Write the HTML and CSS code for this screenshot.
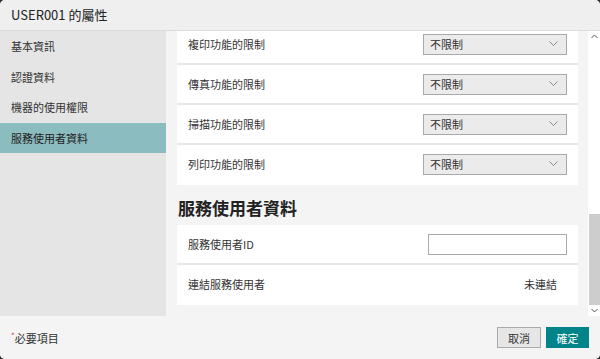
FILE: index.html
```html
<!DOCTYPE html>
<html lang="zh-Hant">
<head>
    <meta charset="UTF-8">
    <title>USER001 的屬性</title>
    <link rel="stylesheet" href="styles.css">
</head>
<body>
    <div class="dialog">
        <div class="dlg-header">USER001 的屬性</div>
        <div class="dlg-body">
            <nav class="sidebar">
                <div class="nav-item">基本資訊</div>
                <div class="nav-item">認證資料</div>
                <div class="nav-item">機器的使用權限</div>
                <div class="nav-item active">服務使用者資料</div>
            </nav>
            <div class="pane">
                <div class="pane-scroll">
                    <div class="card">
                        <div class="row">
                            <span class="label">複印功能的限制</span>
                            <div class="select"><span>不限制</span><svg width="9" height="6" viewBox="0 0 9 6"><polyline points="0.5,0.5 4.5,4.5 8.5,0.5" fill="none" stroke="#8a8a8a" stroke-width="1"/></svg></div>
                        </div>
                        <div class="row">
                            <span class="label">傳真功能的限制</span>
                            <div class="select"><span>不限制</span><svg width="9" height="6" viewBox="0 0 9 6"><polyline points="0.5,0.5 4.5,4.5 8.5,0.5" fill="none" stroke="#8a8a8a" stroke-width="1"/></svg></div>
                        </div>
                        <div class="row">
                            <span class="label">掃描功能的限制</span>
                            <div class="select"><span>不限制</span><svg width="9" height="6" viewBox="0 0 9 6"><polyline points="0.5,0.5 4.5,4.5 8.5,0.5" fill="none" stroke="#8a8a8a" stroke-width="1"/></svg></div>
                        </div>
                        <div class="row">
                            <span class="label">列印功能的限制</span>
                            <div class="select"><span>不限制</span><svg width="9" height="6" viewBox="0 0 9 6"><polyline points="0.5,0.5 4.5,4.5 8.5,0.5" fill="none" stroke="#8a8a8a" stroke-width="1"/></svg></div>
                        </div>
                    </div>
                    <h2 class="section-title">服務使用者資料</h2>
                    <div class="card">
                        <div class="row">
                            <span class="label">服務使用者ID</span>
                            <div class="text-input"></div>
                        </div>
                        <div class="row">
                            <span class="label">連結服務使用者</span>
                            <span class="value">未連結</span>
                        </div>
                    </div>
                </div>
            </div>
            <div class="scrollbar">
                <div class="sb-btn"><svg width="7" height="5" viewBox="0 0 7 5"><polyline points="0.5,4 3.5,1 6.5,4" fill="none" stroke="#555" stroke-width="1"/></svg></div>
                <div class="sb-track"><div class="sb-thumb"></div></div>
                <div class="sb-btn"><svg width="7" height="5" viewBox="0 0 7 5"><polyline points="0.5,1 3.5,4 6.5,1" fill="none" stroke="#555" stroke-width="1"/></svg></div>
            </div>
        </div>
        <div class="dlg-footer">
            <div class="required"><span class="star">*</span>必要項目</div>
            <div class="buttons">
                <button class="btn">取消</button>
                <button class="btn primary">確定</button>
            </div>
        </div>
    </div>
</body>
</html>
```

FILE: styles.css
```css
html, body {
    margin: 0;
    padding: 0;
    background: #2b2b2b;
}
body {
    font-family: "Noto Sans CJK TC", "Liberation Sans", sans-serif;
    color: #333;
    font-size: 11px;
}
.dialog {
    width: 600px;
    height: 359px;
    background: #f4f4f4;
    border-radius: 5px;
    overflow: hidden;
    display: flex;
    flex-direction: column;
}
.dlg-header {
    height: 30px;
    line-height: 30px;
    padding-left: 11px;
    font-size: 13px;
    color: #222;
    background: #efefef;
    border-bottom: 1px solid #dcdcdc;
}
.dlg-body {
    height: 285px;
    display: flex;
}
.sidebar {
    width: 166px;
    background: #e5e5e5;
}
.nav-item {
    height: 30.5px;
    line-height: 30.5px;
    padding-left: 11px;
    color: #333;
}
.nav-item.active {
    background: #8bbcc0;
    color: #222;
}
.pane {
    flex: 1;
    overflow: hidden;
    padding: 0 10px 0 11px;
    background: #f4f4f4;
}
.pane-scroll {
    margin-top: -6px;
}
.card {
    background: #fff;
    padding-bottom: 2px;
}
.row {
    height: 38px;
    display: flex;
    align-items: center;
    justify-content: space-between;
    padding: 0 11px;
}
.row + .row {
    border-top: 2px solid #e8e8e8;
}
.label {
    color: #333;
}
.select {
    width: 144px;
    height: 21px;
    box-sizing: border-box;
    border: 1px solid #a9a9a9;
    background: #ebebeb;
    display: flex;
    align-items: center;
    justify-content: space-between;
    padding: 0 8px 0 6px;
    color: #333;
}
.select svg {
    display: block;
}
.text-input {
    width: 139px;
    height: 21px;
    box-sizing: border-box;
    border: 1px solid #a9a9a9;
    background: #fff;
}
.value {
    margin-right: 10px;
    color: #333;
}
.section-title {
    margin: 0;
    padding: 11px 0 5px 1px;
    line-height: 24px;
    font-size: 17px;
    font-weight: bold;
    color: #222;
}
.scrollbar {
    width: 12px;
    background: #fff;
    display: flex;
    flex-direction: column;
}
.sb-btn {
    height: 11px;
    display: flex;
    align-items: center;
    justify-content: center;
}
.sb-track {
    flex: 1;
    display: flex;
    flex-direction: column;
    justify-content: flex-end;
    padding-left: 1px;
}
.sb-thumb {
    height: 91px;
    background: #cdcdcd;
}
.dlg-footer {
    flex: 1;
    display: flex;
    align-items: center;
    justify-content: space-between;
    padding: 0 11px 0 11px;
    background: #f4f4f4;
}
.required {
    color: #333;
}
.star {
    color: #d0343a;
    font-size: 8px;
    vertical-align: top;
}
.buttons {
    display: flex;
    gap: 5px;
}
.btn {
    font-family: inherit;
    font-size: 11px;
    height: 21px;
    width: 44px;
    padding: 0;
    border: 1px solid #a9a9a9;
    background: #e6e6e6;
    color: #333;
}
.btn.primary {
    width: 43px;
    border-color: #00848a;
    background: #00848a;
    color: #fff;
}
```
